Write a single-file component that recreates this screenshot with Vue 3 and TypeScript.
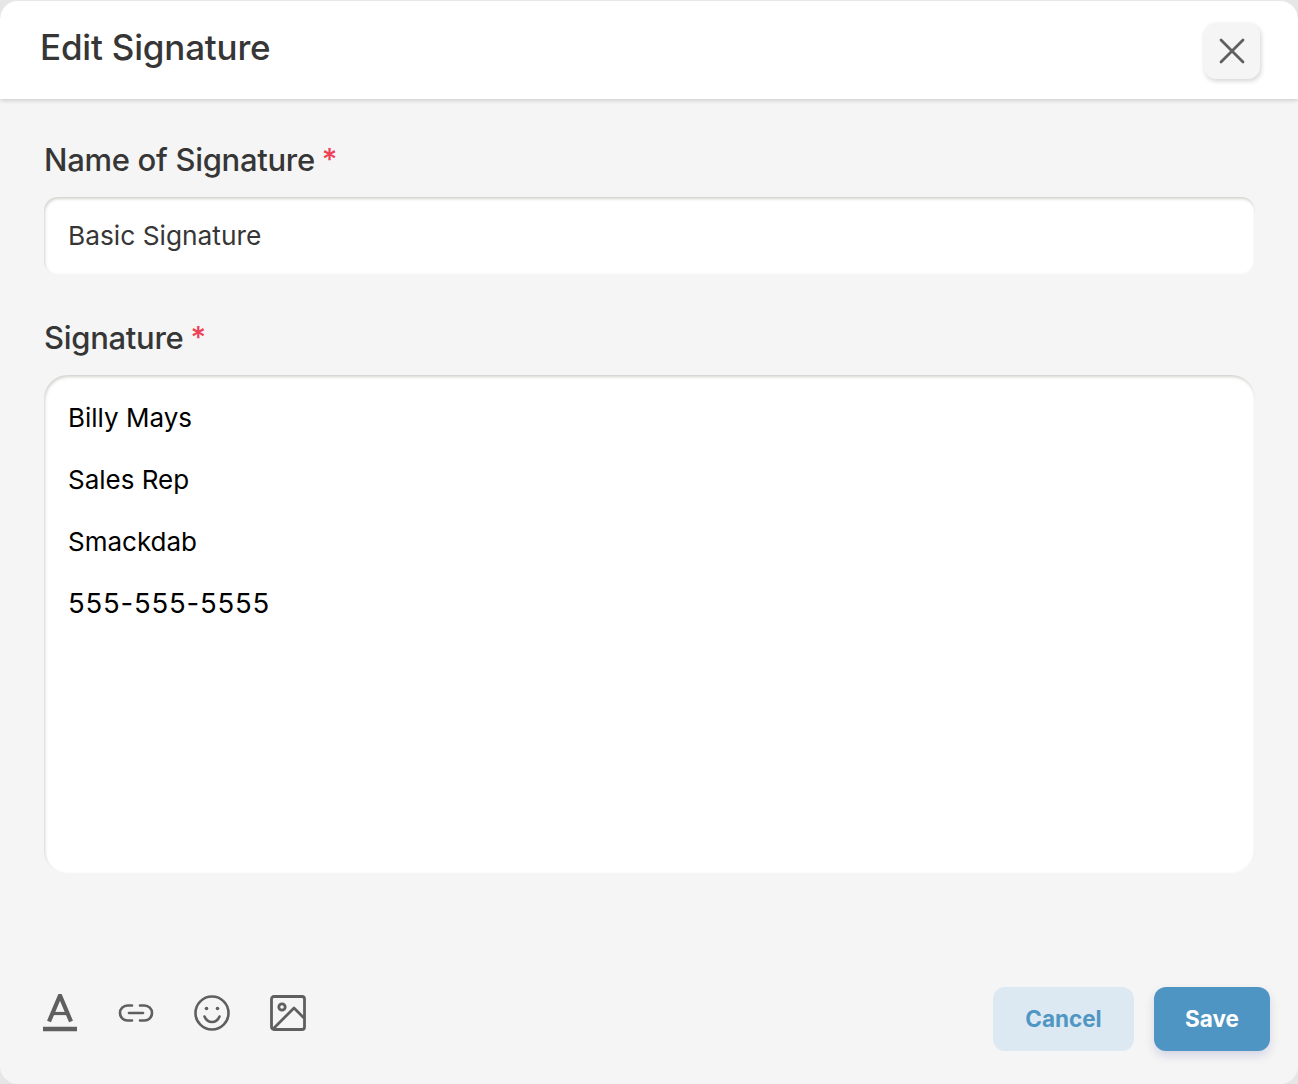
<template>
	<div class="modal">
		<header class="modal-header">
			<h1 class="title">Edit Signature</h1>
			<button class="close-btn" aria-label="Close">
				<svg width="26" height="26" viewBox="0 0 26 26" fill="none" stroke="#5f5f5f" stroke-width="2.8" stroke-linecap="round">
					<path d="M2 2L24 24M24 2L2 24" />
				</svg>
			</button>
		</header>

		<main class="modal-body">
			<label class="field-label name-label">Name of Signature <span class="required">*</span></label>
			<div class="name-input">Basic Signature</div>

			<label class="field-label signature-label">Signature <span class="required">*</span></label>
			<div class="signature-box">
				<p v-for="line in lines" :key="line">{{ line }}</p>
			</div>
		</main>

		<footer class="modal-footer">
			<div class="tools">
				<svg class="tool" width="36" height="38" viewBox="0 0 36 38" fill="none" stroke="#5f5f5f">
					<path d="M7 27.500L18 1.500L29 27.500" stroke-width="4.200" stroke-linejoin="miter" />
					<path d="M10.500 19.500H25.500" stroke-width="3.200" />
					<path d="M1 35H35" stroke-width="4.600" />
				</svg>
				<svg class="tool" width="36" height="36" viewBox="0 0 36 36" fill="none" stroke="#5f5f5f" stroke-width="2.600" stroke-linecap="round">
					<path d="M14 10.500H9.500a7 7 0 0 0 0 15H14" />
					<path d="M22 10.500h4.500a7 7 0 0 1 0 15H22" />
					<path d="M11 18H25" />
				</svg>
				<svg class="tool" width="36" height="36" viewBox="0 0 36 36" fill="none" stroke="#5f5f5f" stroke-width="2.600" stroke-linecap="round">
					<circle cx="18" cy="18" r="16.500" />
					<path d="M10.500 21.500c1.500 3.500 4.300 5.500 7.500 5.500s6-2 7.500-5.500" />
					<circle cx="12.500" cy="13.500" r="1.800" fill="#5f5f5f" stroke="none" />
					<circle cx="23.500" cy="13.500" r="1.800" fill="#5f5f5f" stroke="none" />
				</svg>
				<svg class="tool" width="36" height="36" viewBox="0 0 36 36" fill="none" stroke="#5f5f5f" stroke-width="2.800" stroke-linejoin="round">
					<rect x="1.500" y="1.500" width="33" height="33" rx="2.500" />
					<circle cx="12" cy="12" r="3.200" />
					<path d="M3 34L24 13L34 23" />
				</svg>
			</div>

			<div class="actions">
				<button class="btn btn-cancel">Cancel</button>
				<button class="btn btn-save">Save</button>
			</div>
		</footer>
	</div>
</template>

<script setup lang="ts">
const lines: string[] = ['Billy Mays', 'Sales Rep', 'Smackdab', '555-555-5555']
</script>

<style scoped>
.modal {
	width: 1298px;
	height: 1084px;
	display: flex;
	flex-direction: column;
	background-color: #f5f5f5;
	border-radius: 18px;
	overflow: hidden;
	font-family: Inter, Lato, sans-serif;
	color: #363636;
}

.modal-header {
	flex: none;
	height: 98px;
	margin-top: 1px;
	padding: 0 38px 0 40px;
	box-sizing: border-box;
	display: flex;
	align-items: flex-start;
	justify-content: space-between;
	background-color: #fff;
	border-radius: 18px 18px 0 0;
	box-shadow: 0 1px 5px rgba(0, 0, 0, 0.2);
}

.title {
	margin: 24px 0 0;
	font-size: 35px;
	line-height: 44px;
	font-weight: 500;
	letter-spacing: -0.200px;
}

.close-btn {
	width: 56px;
	height: 56px;
	margin-top: 22px;
	padding: 0;
	display: flex;
	align-items: center;
	justify-content: center;
	background-color: #f5f5f5;
	border: none;
	border-radius: 12px;
	box-shadow: 1px 2px 5px rgba(0, 0, 0, 0.18);
}

.modal-body {
	flex: 1;
	padding: 0 43px 0 44px;
}

.field-label {
	display: block;
	font-size: 31px;
	line-height: 40px;
	font-weight: 500;
	letter-spacing: -0.300px;
}

.name-label {
	margin-top: 40px;
}

.signature-label {
	margin-top: 42px;
}

.required {
	color: #ef4056;
	font-size: 30px;
	font-weight: 500;
	vertical-align: 1px;
	margin-left: -1px;
}

.name-input {
	height: 78px;
	margin-top: 17px;
	padding: 0 24px 2px;
	box-sizing: border-box;
	display: flex;
	align-items: center;
	font-size: 26.300px;
	font-weight: 400;
	background-color: #fff;
	border-radius: 14px;
	box-shadow: inset 1px 2px 3px rgba(90, 85, 70, 0.26), inset -1px -1px 3px rgba(0, 0, 0, 0.04);
}

.signature-box {
	height: 499px;
	margin-top: 17px;
	padding: 24px 24px;
	box-sizing: border-box;
	background-color: #fff;
	border-radius: 24px;
	box-shadow: inset 1px 2px 3px rgba(90, 85, 70, 0.26), inset -1px -1px 3px rgba(0, 0, 0, 0.04);
	color: #000;
	font-size: 26px;
	line-height: 38px;
}

.signature-box p {
	margin: 0 0 23.800px;
}

.signature-box p:last-child {
	font-size: 27.500px;
	letter-spacing: 0.800px;
}

.modal-footer {
	flex: none;
	height: 97px;
	padding: 0 28px 0 42px;
	display: flex;
	align-items: flex-start;
	justify-content: space-between;
}

.tools {
	display: flex;
	align-items: center;
	gap: 40px;
	margin-top: 7px;
}

.actions {
	display: flex;
	gap: 20px;
}

.btn {
	height: 64px;
	padding: 0 0 2px;
	border: none;
	border-radius: 12px;
	font-family: inherit;
	font-size: 22.500px;
	font-weight: 700;
}

.btn-cancel {
	width: 141px;
	background-color: #dce9f3;
	color: #5096c3;
}

.btn-save {
	width: 116px;
	background-color: #4f95c4;
	color: #fff;
	box-shadow: 0 5px 10px rgba(90, 90, 170, 0.2);
}
</style>

<style>
body {
	background-color: #e6e6e6;
}
</style>
